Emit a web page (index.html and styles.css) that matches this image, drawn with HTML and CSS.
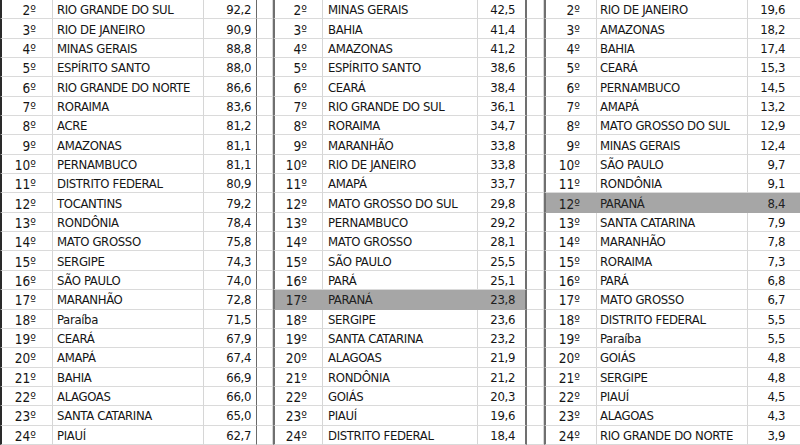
FILE: index.html
```html
<!DOCTYPE html>
<html lang="pt-BR">
<head>
<meta charset="utf-8">
<title>Ranking dos estados</title>
<link rel="stylesheet" href="styles.css">
</head>
<body>
<table class="sheet">
<colgroup>
<col class="c-rank1"><col class="c-name1"><col class="c-val1"><col class="c-gap1">
<col class="c-rank2"><col class="c-name2"><col class="c-val2"><col class="c-gap2">
<col class="c-rank3"><col class="c-name3"><col class="c-val3">
</colgroup>
<tbody>
<tr><td>2º</td><td>RIO GRANDE DO SUL</td><td>92,2</td><td></td><td>2º</td><td>MINAS GERAIS</td><td>42,5</td><td></td><td>2º</td><td>RIO DE JANEIRO</td><td>19,6</td></tr>
<tr><td>3º</td><td>RIO DE JANEIRO</td><td>90,9</td><td></td><td>3º</td><td>BAHIA</td><td>41,4</td><td></td><td>3º</td><td>AMAZONAS</td><td>18,2</td></tr>
<tr><td>4º</td><td>MINAS GERAIS</td><td>88,8</td><td></td><td>4º</td><td>AMAZONAS</td><td>41,2</td><td></td><td>4º</td><td>BAHIA</td><td>17,4</td></tr>
<tr><td>5º</td><td>ESPÍRITO SANTO</td><td>88,0</td><td></td><td>5º</td><td>ESPÍRITO SANTO</td><td>38,6</td><td></td><td>5º</td><td>CEARÁ</td><td>15,3</td></tr>
<tr><td>6º</td><td>RIO GRANDE DO NORTE</td><td>86,6</td><td></td><td>6º</td><td>CEARÁ</td><td>38,4</td><td></td><td>6º</td><td>PERNAMBUCO</td><td>14,5</td></tr>
<tr><td>7º</td><td>RORAIMA</td><td>83,6</td><td></td><td>7º</td><td>RIO GRANDE DO SUL</td><td>36,1</td><td></td><td>7º</td><td>AMAPÁ</td><td>13,2</td></tr>
<tr><td>8º</td><td>ACRE</td><td>81,2</td><td></td><td>8º</td><td>RORAIMA</td><td>34,7</td><td></td><td>8º</td><td>MATO GROSSO DO SUL</td><td>12,9</td></tr>
<tr><td>9º</td><td>AMAZONAS</td><td>81,1</td><td></td><td>9º</td><td>MARANHÃO</td><td>33,8</td><td></td><td>9º</td><td>MINAS GERAIS</td><td>12,4</td></tr>
<tr><td>10º</td><td>PERNAMBUCO</td><td>81,1</td><td></td><td>10º</td><td>RIO DE JANEIRO</td><td>33,8</td><td></td><td>10º</td><td>SÃO PAULO</td><td>9,7</td></tr>
<tr><td>11º</td><td>DISTRITO FEDERAL</td><td>80,9</td><td></td><td>11º</td><td>AMAPÁ</td><td>33,7</td><td></td><td>11º</td><td>RONDÔNIA</td><td>9,1</td></tr>
<tr><td>12º</td><td>TOCANTINS</td><td>79,2</td><td></td><td>12º</td><td>MATO GROSSO DO SUL</td><td>29,8</td><td></td><td class="hl">12º</td><td class="hl">PARANÁ</td><td class="hl">8,4</td></tr>
<tr><td>13º</td><td>RONDÔNIA</td><td>78,4</td><td></td><td>13º</td><td>PERNAMBUCO</td><td>29,2</td><td></td><td>13º</td><td>SANTA CATARINA</td><td>7,9</td></tr>
<tr><td>14º</td><td>MATO GROSSO</td><td>75,8</td><td></td><td>14º</td><td>MATO GROSSO</td><td>28,1</td><td></td><td>14º</td><td>MARANHÃO</td><td>7,8</td></tr>
<tr><td>15º</td><td>SERGIPE</td><td>74,3</td><td></td><td>15º</td><td>SÃO PAULO</td><td>25,5</td><td></td><td>15º</td><td>RORAIMA</td><td>7,3</td></tr>
<tr><td>16º</td><td>SÃO PAULO</td><td>74,0</td><td></td><td>16º</td><td>PARÁ</td><td>25,1</td><td></td><td>16º</td><td>PARÁ</td><td>6,8</td></tr>
<tr><td>17º</td><td>MARANHÃO</td><td>72,8</td><td></td><td class="hl">17º</td><td class="hl">PARANÁ</td><td class="hl">23,8</td><td></td><td>17º</td><td>MATO GROSSO</td><td>6,7</td></tr>
<tr><td>18º</td><td>Paraíba</td><td>71,5</td><td></td><td>18º</td><td>SERGIPE</td><td>23,6</td><td></td><td>18º</td><td>DISTRITO FEDERAL</td><td>5,5</td></tr>
<tr><td>19º</td><td>CEARÁ</td><td>67,9</td><td></td><td>19º</td><td>SANTA CATARINA</td><td>23,2</td><td></td><td>19º</td><td>Paraíba</td><td>5,5</td></tr>
<tr><td>20º</td><td>AMAPÁ</td><td>67,4</td><td></td><td>20º</td><td>ALAGOAS</td><td>21,9</td><td></td><td>20º</td><td>GOIÁS</td><td>4,8</td></tr>
<tr><td>21º</td><td>BAHIA</td><td>66,9</td><td></td><td>21º</td><td>RONDÔNIA</td><td>21,2</td><td></td><td>21º</td><td>SERGIPE</td><td>4,8</td></tr>
<tr><td>22º</td><td>ALAGOAS</td><td>66,0</td><td></td><td>22º</td><td>GOIÁS</td><td>20,3</td><td></td><td>22º</td><td>PIAUÍ</td><td>4,5</td></tr>
<tr><td>23º</td><td>SANTA CATARINA</td><td>65,0</td><td></td><td>23º</td><td>PIAUÍ</td><td>19,6</td><td></td><td>23º</td><td>ALAGOAS</td><td>4,3</td></tr>
<tr><td>24º</td><td>PIAUÍ</td><td>62,7</td><td></td><td>24º</td><td>DISTRITO FEDERAL</td><td>18,4</td><td></td><td>24º</td><td>RIO GRANDE DO NORTE</td><td>3,9</td></tr>
</tbody>
</table>
</body>
</html>
```

FILE: styles.css
```css
* { box-sizing: border-box; }

html, body {
  margin: 0;
  padding: 0;
  background: #ffffff;
  overflow: hidden;
}

.sheet {
  width: 800px;
  height: 445px;
  table-layout: fixed;
  border-collapse: separate;
  border-spacing: 0;
  font-family: "DejaVu Sans Condensed", "Liberation Sans", sans-serif;
  font-size: 13px;
  letter-spacing: -0.35px;
  color: #151515;
}

.c-rank1 { width: 53px; }
.c-name1 { width: 151px; }
.c-val1  { width: 53px; }
.c-gap1  { width: 16px; }
.c-rank2 { width: 50px; }
.c-name2 { width: 155px; }
.c-val2  { width: 49px; }
.c-gap2  { width: 17px; }
.c-rank3 { width: 53px; }
.c-name3 { width: 151px; }
.c-val3  { width: 52px; }

.sheet tr { height: 19.35px; }

.sheet td {
  padding: 2px 0 0 0;
  border-bottom: 1px solid #dadada;
  border-right: 1px solid #d6d6d6;
  white-space: nowrap;
  overflow: hidden;
  line-height: 16px;
  vertical-align: middle;
}

/* rank columns */
.sheet td:nth-child(1),
.sheet td:nth-child(5),
.sheet td:nth-child(9) { text-align: right; font-size: 13.5px; letter-spacing: 0; }
.sheet td:nth-child(1) { padding-right: 16px; border-left: 2px solid #2a2a2a; }
.sheet td:nth-child(5) { padding-right: 15px; border-left: 2px solid #707070; }
.sheet td:nth-child(9) { padding-right: 16px; border-left: 2px solid #707070; }

/* name columns */
.sheet td:nth-child(2)  { padding-left: 4px; }
.sheet td:nth-child(6)  { padding-left: 5px; }
.sheet td:nth-child(10) { padding-left: 3px; }

/* value columns */
.sheet td:nth-child(3),
.sheet td:nth-child(7),
.sheet td:nth-child(11) { text-align: right; }
.sheet td:nth-child(3)  { padding-right: 5px; border-right: 1px solid #6a6a6a; }
.sheet td:nth-child(7)  { padding-right: 10px; border-right: 2px solid #707070; }
.sheet td:nth-child(11) { padding-right: 15px; border-right: none; }

/* highlighted rows */
.sheet td.hl {
  background: #a6a6a6;
  border-bottom-color: #a6a6a6;
  color: #202020;
}
.sheet td.hl:nth-child(5),
.sheet td.hl:nth-child(6),
.sheet td.hl:nth-child(9),
.sheet td.hl:nth-child(10) { border-right-color: #a6a6a6; }
```
